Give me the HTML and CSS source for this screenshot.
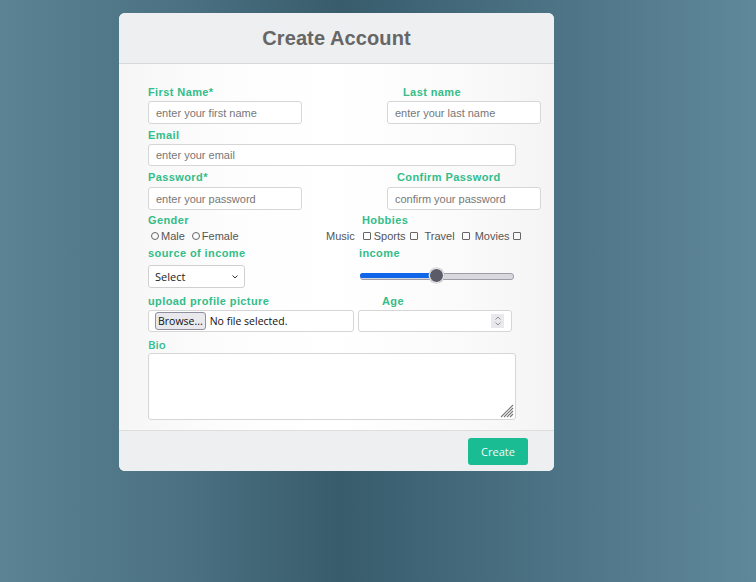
FILE: index.html
```html
<!DOCTYPE html>
<html lang="en">
<head>
<meta charset="utf-8">
<title>Create Account</title>
<link rel="stylesheet" href="styles.css">
</head>
<body>
<div class="card">
  <div class="card-header"><h1 class="title">Create Account</h1></div>
  <form class="card-body">
    <div class="row row-name">
      <div class="group g-first">
        <label class="lbl">First Name*</label>
        <input class="field w154" type="text" placeholder="enter your first name">
      </div>
      <div class="group g-last">
        <label class="lbl ind16">Last name</label>
        <input class="field w154" type="text" placeholder="enter your last name">
      </div>
    </div>
    <div class="row row-email">
      <div class="group">
        <label class="lbl">Email</label>
        <input class="field w368" type="text" placeholder="enter your email">
      </div>
    </div>
    <div class="row row-pass">
      <div class="group g-first">
        <label class="lbl">Password*</label>
        <input class="field w154" type="password" placeholder="enter your password">
      </div>
      <div class="group g-last">
        <label class="lbl ind10">Confirm Password</label>
        <input class="field w154" type="password" placeholder="confirm your password">
      </div>
    </div>
    <div class="row row-gender">
      <div class="group g-gender">
        <label class="lbl">Gender</label>
        <div class="opts opts-gender">
          <span class="radio"></span><span class="opt">Male</span>
          <span class="radio r2"></span><span class="opt">Female</span>
        </div>
      </div>
      <div class="group g-hobby">
        <label class="lbl ind36">Hobbies</label>
        <div class="opts opts-hobby">
          <span class="opt">Music</span><span class="check c-music"></span>
          <span class="opt">Sports</span><span class="check c-sports"></span>
          <span class="opt">Travel</span><span class="check c-travel"></span>
          <span class="opt">Movies</span><span class="check c-movies"></span>
        </div>
      </div>
    </div>
    <div class="row row-income">
      <div class="group g-source">
        <label class="lbl">source of income</label>
        <div class="select"><span>Select</span>
          <svg width="8" height="6" viewBox="0 0 8 6"><path d="M1.5 1.5 L4 4 L6.5 1.5" fill="none" stroke="#333" stroke-width="1"/></svg>
        </div>
      </div>
      <div class="group g-range">
        <label class="lbl">income</label>
        <div class="range">
          <div class="range-fill"></div>
          <div class="range-thumb"></div>
        </div>
      </div>
    </div>
    <div class="row row-file">
      <div class="group g-file">
        <label class="lbl">upload profile picture</label>
        <div class="filebox"><span class="browse">Browse...</span><span class="nofile">No file selected.</span></div>
      </div>
      <div class="group g-age">
        <label class="lbl ind24">Age</label>
        <div class="agebox">
          <span class="spin"><svg width="8" height="12" viewBox="0 0 8 12"><path d="M1.5 4.5 L4 2 L6.5 4.5 M1.5 7.5 L4 10 L6.5 7.5" fill="none" stroke="#888" stroke-width="0.9"/></svg></span>
        </div>
      </div>
    </div>
    <div class="row row-bio">
      <div class="group">
        <label class="lbl lbl-bio">Bio</label>
        <div class="bio">
          <svg class="grip" width="14" height="14" viewBox="0 0 14 14"><path d="M13 1 L1 13 M13 4 L4 13 M13 7 L7 13 M13 10 L10 13" stroke="#777" stroke-width="1.1"/></svg>
        </div>
      </div>
    </div>
  </form>
  <div class="card-footer"><button class="btn" type="button">Create</button></div>
</div>
</body>
</html>
```

FILE: styles.css
```css
* { box-sizing: border-box; }
html, body { margin: 0; padding: 0; }
body {
  width: 756px;
  height: 582px;
  overflow: hidden;
  background: linear-gradient(to right, #5b8394 0%, #4a7081 25%, #385c6c 45%, #3e6475 55%, #4e7587 75%, #5f889a 100%);
  font-family: "Liberation Sans", Arial, sans-serif;
  padding-top: 13px;
}
.card {
  width: 435px;
  margin-left: 119px;
  border-radius: 6px;
  overflow: hidden;
  background: #fff;
}
.card-header {
  height: 51px;
  background: #eeeff1;
  border-bottom: 1px solid #d7d9db;
  display: flex;
  align-items: center;
  justify-content: center;
}
.title {
  margin: 0;
  font-size: 20px;
  font-weight: bold;
  color: #666;
  line-height: 24px;
  letter-spacing: 0.1px;
}
.card-body {
  margin: 0;
  padding: 22px 13px 10px 29px;
  height: 366px;
  background: linear-gradient(to right, #f6f6f6 0%, #fdfdfd 25%, #fff 50%, #fafafa 80%, #f4f4f4 100%);
  display: flex;
  flex-direction: column;
}
.row { display: flex; }
.group { display: flex; flex-direction: column; }
.lbl {
  display: block;
  font-size: 11px;
  font-weight: bold;
  color: #33bd89;
  line-height: 13px;
  height: 13px;
  margin-bottom: 2px;
  letter-spacing: 0.4px;
  white-space: nowrap;
}
.ind10 { padding-left: 10px; }
.ind16 { padding-left: 16px; }
.ind24 { padding-left: 24px; }
.ind36 { padding-left: 36px; }
.field {
  height: 23px;
  border: 1px solid #d6d6d6;
  border-radius: 3px;
  background: #fff;
  padding: 0 7px;
  font-family: "Liberation Sans", Arial, sans-serif;
  font-size: 11px;
  color: #333;
  outline: none;
}
.field::placeholder { color: #777; }
.w154 { width: 154px; }
.w368 { width: 368px; }
.g-last { margin-left: 85px; }

.row-email { margin-top: 5px; }
.row-email .field { height: 22px; }
.row-pass { margin-top: 5px; }
.row-pass .lbl { margin-bottom: 3px; }
.row-gender { margin-top: 4px; }
.g-gender { width: 178px; }
.opts {
  display: flex;
  align-items: center;
  height: 16px;
  font-size: 11px;
  color: #555;
  margin-top: -1px;
}
.opts-gender { padding-left: 3px; }
.radio {
  width: 8px; height: 8px;
  border: 1px solid #666;
  border-radius: 50%;
  margin-right: 2px;
}
.r2 { margin-left: 7px; }
.check {
  width: 8px; height: 8px;
  border: 1px solid #666;
  border-radius: 1px;
}
.c-music { margin-left: 8px; margin-right: 3px; }
.c-sports { margin-left: 4px; margin-right: 7px; }
.c-travel { margin-left: 7px; margin-right: 5px; }
.c-movies { margin-left: 3px; }

.row-income { margin-top: 3px; }
.row-income .lbl { margin-bottom: 5px; }
.g-source { width: 211px; }
.select {
  width: 97px; height: 23px;
  border: 1px solid #d0d0d0;
  border-radius: 3px;
  background: #fff;
  display: flex;
  align-items: center;
  justify-content: space-between;
  padding: 0 5px 0 6px;
  font-family: "Open Sans", "Liberation Sans", sans-serif;
  font-size: 11px;
  color: #222;
}
.range {
  position: relative;
  width: 154px;
  height: 23px;
  margin-left: 1px;
}
.range::before {
  content: "";
  position: absolute;
  left: 0; right: 0; top: 8px;
  height: 5px;
  border-radius: 3px;
  background: #d8d8de;
  border: 1px solid #9d9da8;
}
.range-fill {
  position: absolute;
  left: 0; top: 8px;
  width: 77px; height: 5px;
  border-radius: 3px;
  background: #0f66e8;
}
.range-thumb {
  position: absolute;
  left: 69px; top: 3px;
  width: 15px; height: 15px;
  border-radius: 50%;
  background: #5a5a68;
  border: 1.5px solid #fff;
  box-shadow: 0 0 0 0.5px #bbb;
}

.row-file { margin-top: 7px; }
.g-file { width: 210px; }
.filebox {
  width: 206px; height: 22px;
  border: 1px solid #d6d6d6;
  border-radius: 3px;
  background: #fff;
  display: flex;
  align-items: center;
  padding-left: 6px;
  font-family: "Open Sans", "Liberation Sans", sans-serif;
  font-size: 10.5px;
  color: #111;
}
.browse {
  height: 18px;
  line-height: 16px;
  padding: 0 2px;
  border: 1px solid #8f8f9d;
  border-radius: 3px;
  background: #e9e9ed;
  margin-right: 4px;
}
.agebox {
  width: 154px; height: 22px;
  border: 1px solid #d6d6d6;
  border-radius: 3px;
  background: #fff;
  display: flex;
  align-items: center;
  justify-content: flex-end;
  padding-right: 7px;
}
.spin {
  width: 13px; height: 14px;
  background: #e9e9ed;
  display: flex;
  align-items: center;
  justify-content: center;
}

.row-bio { margin-top: 6px; }
.lbl-bio {
  font-family: "Open Sans", "Liberation Sans", sans-serif;
  font-weight: 600;
  font-size: 11.5px;
  letter-spacing: 0;
}
.bio {
  position: relative;
  width: 368px; height: 67px;
  border: 1px solid #d6d6d6;
  border-radius: 3px;
  background: #fff;
}
.grip { position: absolute; right: 1px; bottom: 1px; }

.card-footer {
  height: 41px;
  background: #eeeff1;
  border-top: 1px solid #dcdee0;
  display: flex;
  align-items: center;
  justify-content: flex-end;
  padding-right: 26px;
}
.btn {
  width: 60px; height: 27px;
  border: none;
  border-radius: 3px;
  background: #1abc94;
  color: #f2fbf8;
  font-family: "Open Sans", "Liberation Sans", sans-serif;
  font-size: 11px;
  padding: 0;
}
```
